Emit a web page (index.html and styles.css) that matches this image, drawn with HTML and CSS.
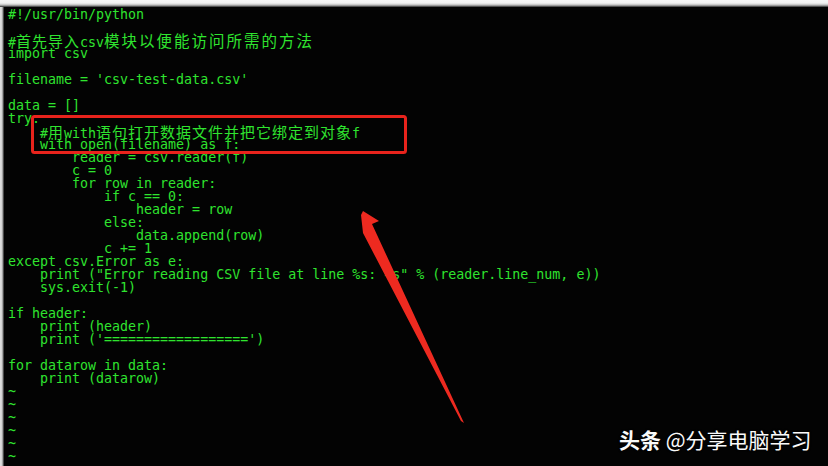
FILE: index.html
```html
<!DOCTYPE html>
<html lang="zh-CN">
<head>
    <meta charset="UTF-8">
    <title>csv-test.py - vim</title>
    <link rel="stylesheet" href="styles.css">
</head>
<body>
    <div class="window">
        <div class="title-edge"></div>
        <div class="term-row">
            <div class="left-edge"></div>
            <div class="term">
                <div class="ln">#!/usr/bin/python</div>
                <div class="ln"></div>
                <div class="ln">#<span class="cjk">首先导入</span>csv<span class="cjk wider">模块以便能访问所需的方法</span></div>
                <div class="ln">import csv</div>
                <div class="ln"></div>
                <div class="ln">filename = 'csv-test-data.csv'</div>
                <div class="ln"></div>
                <div class="ln">data = []</div>
                <div class="ln">try:</div>
                <div class="ln">    #<span class="cjk">用</span>with<span class="cjk">语句打开数据文件并把它绑定到对象</span>f</div>
                <div class="ln">    with open(filename) as f:</div>
                <div class="ln">        reader = csv.reader(f)</div>
                <div class="ln">        c = 0</div>
                <div class="ln">        for row in reader:</div>
                <div class="ln">            if c == 0:</div>
                <div class="ln">                header = row</div>
                <div class="ln">            else:</div>
                <div class="ln">                data.append(row)</div>
                <div class="ln">            c += 1</div>
                <div class="ln">except csv.Error as e:</div>
                <div class="ln">    print ("Error reading CSV file at line %s: %s" % (reader.line_num, e))</div>
                <div class="ln">    sys.exit(-1)</div>
                <div class="ln"></div>
                <div class="ln">if header:</div>
                <div class="ln">    print (header)</div>
                <div class="ln">    print ('==================')</div>
                <div class="ln"></div>
                <div class="ln">for datarow in data:</div>
                <div class="ln">    print (datarow)</div>
                <div class="ln">~</div>
                <div class="ln">~</div>
                <div class="ln">~</div>
                <div class="ln">~</div>
                <div class="ln">~</div>
                <div class="ln">~</div>
            </div>
        </div>

        <!-- annotation drawn over the screenshot -->
        <svg class="marks" width="828" height="466" viewBox="0 0 828 466">
            <rect x="32.5" y="116.5" width="373" height="36" rx="2" fill="none" stroke="#e8231c" stroke-width="3"/>
            <polygon points="363,211 379,221 372,224 464,423 461,421 363,233 361,215" fill="#ee2a20"/>
        </svg>

        <div class="watermark"><b>头条</b> @分享电脑学习</div>
    </div>
</body>
</html>
```

FILE: styles.css
```css
* {
    margin: 0;
    padding: 0;
    box-sizing: border-box;
}

body {
    background: #000;
    width: 828px;
    height: 466px;
    overflow: hidden;
}

.window {
    position: relative;
    width: 828px;
    height: 466px;
    display: flex;
    flex-direction: column;
    background: #030303;
}

.title-edge {
    height: 7px;
    flex: none;
    background: linear-gradient(#f6f6f6 0, #f1f1f1 3px, #d9d9d9 4px, #bdbdbd 5px, #7a7a7a 6px, #2a2a2a 7px);
}

.term-row {
    flex: 1;
    display: flex;
}

.left-edge {
    width: 4px;
    flex: none;
    background: linear-gradient(90deg, #e2e2e2 0, #cfcfcf 2px, #777 3px, #1a1a1a 4px);
}

.term {
    flex: 1;
    padding: 1px 0 0 4px;
    font-family: "DejaVu Sans Mono", "Liberation Mono", monospace;
    font-size: 13.3px;
    color: #2fe42f;
}

.ln {
    height: 13px;
    line-height: 13px;
    white-space: pre;
}

.cjk {
    font-family: "Noto Sans CJK SC", sans-serif;
    font-size: 15px;
    letter-spacing: 1px;
    line-height: 13px;
}

.cjk.wider {
    font-size: 15.5px;
    letter-spacing: 2px;
}

.marks {
    position: absolute;
    left: 0;
    top: 0;
    pointer-events: none;
}

.watermark {
    position: absolute;
    left: 619px;
    top: 426px;
    font-family: "Noto Sans CJK SC", sans-serif;
    font-size: 21px;
    line-height: 26px;
    color: #fafafa;
    text-shadow: 0 0 2px rgba(0, 0, 0, 0.6);
}

.watermark b {
    font-weight: 700;
}
```
